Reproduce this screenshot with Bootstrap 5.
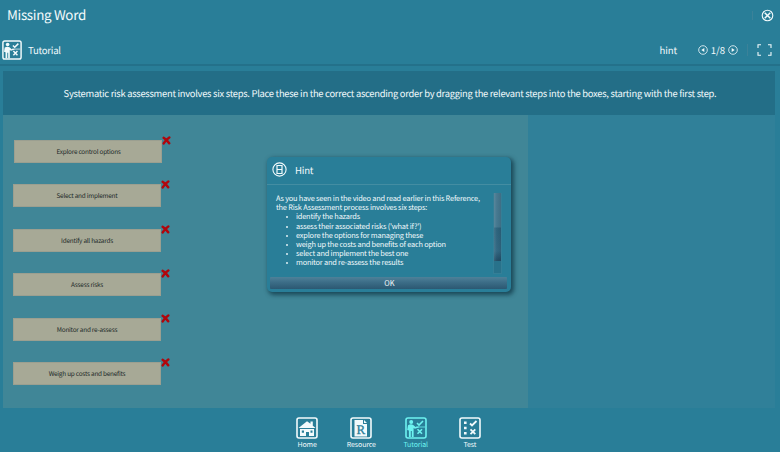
<!DOCTYPE html>
<html lang="en">
<head>
<meta charset="utf-8">
<meta name="viewport" content="width=device-width, initial-scale=1">
<title>Missing Word</title>
<link href="https://cdn.jsdelivr.net/npm/bootstrap@5.3.0/dist/css/bootstrap.min.css" rel="stylesheet">
<style>
body{width:780px;height:452px;overflow:hidden;background:#297e98;color:#f2fafc;font-family:"Noto Sans CJK SC","Noto Sans",sans-serif;font-size:9.6px;line-height:14px;text-rendering:geometricPrecision}
svg{display:block;flex:none}
.titlebar{height:30px;padding:0 6px 0 7px}
.app-title{font-size:13.4px;line-height:20px;font-weight:400;letter-spacing:-.32px;padding-bottom:2px}
.toolbar{height:36px;padding:5px 8px 0 2px;border-bottom:2px solid #24718a}
.crumb{margin-left:6px;letter-spacing:-.25px}
.hint-link{margin-right:21px;letter-spacing:-.1px}
.count{width:20px;text-align:center}
.sep{width:1px;background:#3b8299}
.sep-top{height:9px}
.sep-tool{height:12px;margin:0 9px}
.instruction{margin:5px 5px 0 3px;height:44px;background:#236e87;font-size:9.4px;letter-spacing:-.27px}
.prompt{white-space:nowrap;padding:0 0 1px 2px}
.board{margin:0 5px 0 3px;height:293px;background:#308099}
.answers{width:525px;background:#408697;padding:25px 0 0 9.5px}
.step{width:148px;height:23px;margin-bottom:21.4px;padding-top:1px;background:#a7a996;border:1px solid #9b9f90;color:#222a29;font-size:6.4px;letter-spacing:-.22px;padding-left:1px}
.step:first-child{margin-left:1.5px}
.wrong{left:147px;top:-5px}
.hint-box{left:267px;top:157px;width:244px;height:135px;border-radius:5px;background:#297e98;box-shadow:2px 2px 4px 1px rgba(15,55,70,.75)}
.hint-head{height:28px;padding:0 5px 2px;border-bottom:1px solid #448da2}
.hint-title{margin-left:8px;letter-spacing:-.2px}
.hint-body{height:92px;padding:8px 9px 0 9px}
.hint-text{font-size:7.4px;letter-spacing:-.2px;line-height:9.2px;white-space:nowrap;padding-top:1px}
.hint-text ul{padding-left:20px;list-style:none}
.hint-text li{position:relative}
.hint-text li::before{content:"";position:absolute;left:-10px;top:4px;width:2px;height:2px;border-radius:1px;background:#dff0f4}
.track{width:9px;height:81px;background:#28728b;border:1px solid #347f97;border-top:0}
.thumb{height:68px;background:linear-gradient(90deg,rgba(255,255,255,.1),transparent 40%,rgba(0,30,50,.12)),linear-gradient(#487990 0,#457990 34px,#2e647d 35px,#336983 58px,#244f68 67px)}
.ok-btn{margin:0 4px 0 3px;height:12px;border-radius:1px;background:linear-gradient(#4e8199,#3c6d87 45%,#2b5872);color:#f2f8fa;font-size:7.4px;line-height:12px;border:0;padding:0 0 0 2px}
.dock{height:44px;padding-top:9px;margin-left:-3px}
.dock-item{width:54.3px;font-size:7px;letter-spacing:-.12px;line-height:12.4px;color:#f2fafc}
.dock-item.current{color:#6df2f0}
</style>
<script src="https://cdn.jsdelivr.net/npm/bootstrap@5.3.0/dist/js/bootstrap.bundle.min.js"></script>
</head>
<body>
<svg width="0" height="0" class="position-absolute">
<defs>
<symbol id="teacher" viewBox="0 0 22 22"><rect x="1" y="1" width="20" height="20" rx="2" fill="none" stroke="currentColor" stroke-width="1.6"/><circle cx="6.2" cy="5" r="2" fill="currentColor"/><path d="M3 8.2q3-1.6 5.2-.2l2.4 2.1 3-.6.2 1-3.9 1.2L8.6 11v9H6.8v-6h-1v6H3.9v-6.500L2.200 13z" fill="currentColor"/><path d="M12 6l2 2 4-4M12.500 12.200l4.500 4.600m0-4.600l-4.500 4.600" fill="none" stroke="currentColor" stroke-width="1.600"/><path d="M11 10h9" stroke="currentColor" stroke-width=".8"/></symbol>
<symbol id="cross" viewBox="0 0 9 9"><path d="M1.700 1.900Q4 3 7.200 7.200M7.300 1.500Q4 3.500 1.700 7.400" fill="none" stroke="#b1060c" stroke-width="2.500" stroke-linecap="round"/></symbol>
</defs>
</svg>
<header>
<div class="titlebar d-flex align-items-center">
<h1 class="app-title m-0">Missing Word</h1>
<div class="sep sep-top ms-auto me-1"></div>
<svg class="ms-1" width="13" height="13" viewBox="0 0 13 13" fill="none" stroke="currentColor"><circle cx="6.500" cy="6.500" r="5.300" stroke-width="1.100"/><path d="M3.700 3.700l5.600 5.600m0-5.600l-5.600 5.600" stroke-width="1.500"/></svg>
</div>
<div class="toolbar d-flex align-items-center">
<svg width="20" height="20"><use href="#teacher"/></svg>
<span class="crumb">Tutorial</span>
<span class="hint-link ms-auto">hint</span>
<div class="d-flex align-items-center">
<svg width="10" height="10" viewBox="0 0 10 10"><circle cx="5" cy="5" r="4.300" fill="none" stroke="currentColor" stroke-width=".8"/><path d="M6.300 3v4L3.300 5z" fill="currentColor"/></svg>
<span class="count">1/8</span>
<svg width="10" height="10" viewBox="0 0 10 10"><circle cx="5" cy="5" r="4.300" fill="none" stroke="currentColor" stroke-width=".8"/><path d="M3.700 3v4l3-2z" fill="currentColor"/></svg>
</div>
<div class="sep sep-tool"></div>
<svg width="15" height="12" viewBox="0 0 15 12" fill="none" stroke="currentColor" stroke-width="1.100"><path d="M4 .7H1V4M11 .7h3V4M4 11.300H1V8M11 11.300h3V8"/></svg>
</div>
</header>
<main>
<div class="instruction d-flex align-items-center justify-content-center"><span class="prompt">Systematic risk assessment involves six steps. Place these in the correct ascending order by dragging the relevant steps into the boxes, starting with the first step.</span></div>
<div class="board d-flex">
<div class="answers">
<div class="step position-relative d-flex align-items-center justify-content-center">Explore control options<svg class="wrong position-absolute" width="9" height="9"><use href="#cross"/></svg></div>
<div class="step position-relative d-flex align-items-center justify-content-center">Select and implement<svg class="wrong position-absolute" width="9" height="9"><use href="#cross"/></svg></div>
<div class="step position-relative d-flex align-items-center justify-content-center">Identify all hazards<svg class="wrong position-absolute" width="9" height="9"><use href="#cross"/></svg></div>
<div class="step position-relative d-flex align-items-center justify-content-center">Assess risks<svg class="wrong position-absolute" width="9" height="9"><use href="#cross"/></svg></div>
<div class="step position-relative d-flex align-items-center justify-content-center">Monitor and re-assess<svg class="wrong position-absolute" width="9" height="9"><use href="#cross"/></svg></div>
<div class="step position-relative d-flex align-items-center justify-content-center">Weigh up costs and benefits<svg class="wrong position-absolute" width="9" height="9"><use href="#cross"/></svg></div>
</div>
</div>
</main>
<section class="hint-box position-absolute d-flex flex-column" role="dialog" aria-label="Hint">
<div class="hint-head d-flex align-items-center">
<svg width="15" height="15" viewBox="0 0 15 15" fill="none" stroke="currentColor"><circle cx="7.500" cy="7.500" r="6.600" stroke-width="1.100"/><path d="M5 3.500h5v8H5zM5 7.500h5" stroke-width="1.200"/></svg>
<span class="hint-title">Hint</span>
</div>
<div class="hint-body d-flex justify-content-between">
<div class="hint-text">As you have seen in the video and read earlier in this Reference,<br>the Risk Assessment process involves six steps:
<ul class="m-0"><li>identify the hazards</li><li>assess their associated risks ('what if?')</li><li>explore the options for managing these</li><li>weigh up the costs and benefits of each option</li><li>select and implement the best one</li><li>monitor and re-assess the results</li></ul>
</div>
<div class="track"><div class="thumb"></div></div>
</div>
<button class="ok-btn" type="button">OK</button>
</section>
<footer class="dock d-flex justify-content-center">
<div class="dock-item d-flex flex-column align-items-center"><svg width="22" height="22" viewBox="0 0 22 22"><rect x="1" y="1" width="20" height="20" rx="2" fill="none" stroke="currentColor" stroke-width="1.600"/><path fill="currentColor" fill-rule="evenodd" d="M2.500 11L11 4.200l3.500 2.600V4.500h2.300v4.200l2.800 2.300zM4 12h14v7h-5v-4h-3v4H4zm1.800 1.500v2.200H8v-2.200zm8.700 0v2.200h2v-2.200z"/></svg>Home</div>
<div class="dock-item d-flex flex-column align-items-center"><svg width="22" height="22" viewBox="0 0 22 22"><rect x="1" y="1" width="20" height="20" rx="2" fill="none" stroke="currentColor" stroke-width="1.600"/><path fill="currentColor" d="M4.500 3h8.500v4h4v12.500H4.500zM14 3l3 3h-3z"/><text x="10.900" y="16.500" text-anchor="middle" font-family="Liberation Serif" font-size="13" fill="#297e98" stroke="#297e98" stroke-width=".3">R</text></svg>Resource</div>
<div class="dock-item current d-flex flex-column align-items-center"><svg width="22" height="22"><use href="#teacher"/></svg>Tutorial</div>
<div class="dock-item d-flex flex-column align-items-center"><svg width="22" height="22" viewBox="0 0 22 22"><rect x="1" y="1" width="20" height="20" rx="2" fill="none" stroke="currentColor" stroke-width="1.600"/><path fill="currentColor" d="M5 4.500h2.600v2.600H5zM5 9.700h2.600v2.600H5zM5 14.900h2.600v2.600H5z"/><path d="M11 6.500l2 2 4.500-4.500M11.500 12.300l4.800 4.800m0-4.800l-4.800 4.800" fill="none" stroke="currentColor" stroke-width="1.800"/></svg>Test</div>
</footer>
</body>
</html>
